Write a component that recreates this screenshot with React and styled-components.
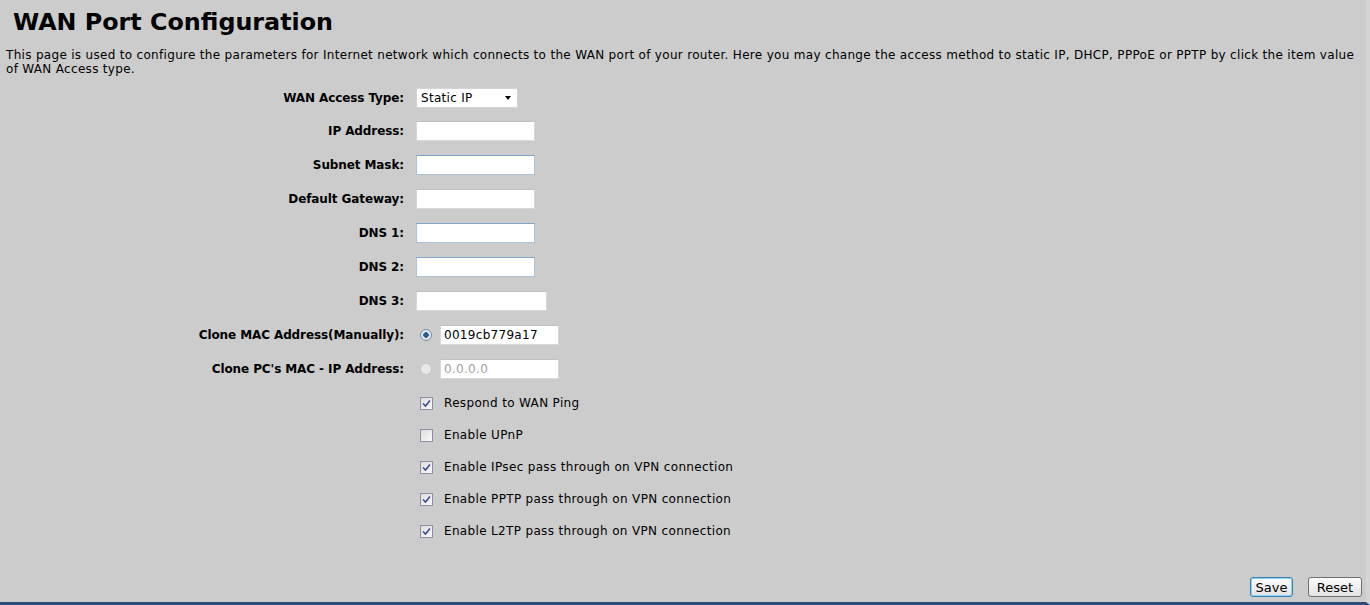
import React from 'react';
import styled, { createGlobalStyle } from 'styled-components';

const GlobalStyle = createGlobalStyle`
  html, body {
    margin: 0;
    padding: 0;
    background: #cccccc;
  }
  body {
    font-family: "DejaVu Sans", Verdana, sans-serif;
    font-size: 12px;
    color: #000;
  }
`;

const Page = styled.div`
  box-sizing: border-box;
  width: 1370px;
  height: 605px;
  background: #cccccc;
  border-bottom: 3px solid #2d4a78;
  border-right: 4px solid #d4d4d4;
  display: flex;
  flex-direction: column;
  padding: 7px 0 0 6px;
  overflow: hidden;
`;

const Title = styled.h1`
  margin: 0 0 0 7px;
  font-size: 23.8px;
  font-weight: bold;
  line-height: 30px;
`;

const Intro = styled.p`
  margin: 11px 10px 0 0;
  font-size: 12px;
  line-height: 14px;
  letter-spacing: 0.31px;
`;

const Form = styled.div`
  display: grid;
  grid-template-columns: 398px auto;
  column-gap: 12px;
  margin-top: 6px;
`;

const Label = styled.div`
  box-sizing: border-box;
  height: ${(p) => p.h || 34}px;
  display: flex;
  align-items: center;
  justify-content: flex-end;
  font-weight: bold;
  font-size: 12px;
  letter-spacing: -0.1px;
`;

const Field = styled.div`
  box-sizing: border-box;
  height: ${(p) => p.h || 34}px;
  padding-top: ${(p) => p.top || 0}px;
  display: flex;
  align-items: center;
  gap: 8px;
`;

const TextBox = styled.div`
  box-sizing: border-box;
  width: ${(p) => p.w || 119}px;
  height: 20px;
  background: #fff;
  border: 1px solid ${(p) => (p.blue ? '#a9c1d9' : '#d8d8d8')};
  border-top-color: ${(p) => (p.blue ? '#7fa4c8' : '#c0c0c0')};
  padding: 0 3px;
  display: flex;
  align-items: center;
  font-size: 12px;
  letter-spacing: 0.3px;
  color: ${(p) => (p.disabled ? '#a0a0a0' : '#000')};
`;

const Select = styled.div`
  box-sizing: border-box;
  width: 102px;
  height: 20px;
  background: #fff;
  border: 1px solid #d4d4d4;
  display: flex;
  align-items: center;
  justify-content: space-between;
  padding: 0 6px 0 4px;
  font-size: 12px;
  letter-spacing: 0.3px;
`;

const Arrow = styled.span`
  width: 0;
  height: 0;
  border-left: 3.5px solid transparent;
  border-right: 3.5px solid transparent;
  border-top: 4px solid #000;
`;

const Radio = styled.span`
  box-sizing: border-box;
  width: 12px;
  height: 12px;
  margin-left: 4px;
  border-radius: 50%;
  border: 1px solid ${(p) => (p.disabled ? '#c8c8c8' : '#7a8ea8')};
  background: ${(p) => (p.disabled ? '#e8e8e8' : 'radial-gradient(circle, #2a5c8f 0 2.5px, #dfe6ee 3px)')};
`;

const Check = styled.span`
  box-sizing: border-box;
  width: 13px;
  height: 13px;
  margin-left: 4px;
  border: 1px solid #8f8f9f;
  background: linear-gradient(135deg, #dcdcdc, #fbfbfb);
  display: flex;
  align-items: center;
  justify-content: center;
`;

const CheckText = styled.span`
  margin-left: 3px;
  font-size: 12px;
  letter-spacing: 0.34px;
`;

const Footer = styled.div`
  margin-top: auto;
  display: flex;
  justify-content: flex-end;
  gap: 15px;
  padding: 0 4px 5px 0;
`;

const Button = styled.button`
  font-family: "DejaVu Sans", Verdana, sans-serif;
  font-size: 13px;
  width: ${(p) => p.w}px;
  height: 20px;
  padding: 0;
  background: linear-gradient(#fbfbfb, #e3e3e3);
  border: 1px solid ${(p) => (p.primary ? '#3c7fb1' : '#707070')};
  box-shadow: ${(p) => (p.primary ? '0 0 0 1px #8ad3f2 inset' : 'none')};
  border-radius: 3px;
  color: #000;
`;

const Tick = () => (
  <svg width="9" height="9" viewBox="0 0 9 9">
    <path d="M1 4.5 L3.5 7 L8 1.5" fill="none" stroke="#3a4a8a" strokeWidth="1.6" />
  </svg>
);

const textRows = [
  { label: 'IP Address:' },
  { label: 'Subnet Mask:', blue: true },
  { label: 'Default Gateway:' },
  { label: 'DNS 1:', blue: true },
  { label: 'DNS 2:', blue: true },
  { label: 'DNS 3:', w: 131 },
];

const checks = [
  { text: 'Respond to WAN Ping', on: true },
  { text: 'Enable UPnP', on: false },
  { text: 'Enable IPsec pass through on VPN connection', on: true },
  { text: 'Enable PPTP pass through on VPN connection', on: true },
  { text: 'Enable L2TP pass through on VPN connection', on: true },
];

export default function App() {
  return (
    <>
      <GlobalStyle />
      <Page>
        <Title>WAN Port Configuration</Title>
        <Intro>
          This page is used to configure the parameters for Internet network which connects to the WAN port of your router. Here you may change the access method to static IP, DHCP, PPPoE or PPTP by click the item value of WAN Access type.
        </Intro>
        <Form>
          <Label h={32}>WAN Access Type:</Label>
          <Field h={32}>
            <Select>
              Static IP <Arrow />
            </Select>
          </Field>
          {textRows.map((r) => (
            <React.Fragment key={r.label}>
              <Label>{r.label}</Label>
              <Field>
                <TextBox w={r.w} blue={r.blue} />
              </Field>
            </React.Fragment>
          ))}
          <Label>Clone MAC Address(Manually):</Label>
          <Field>
            <Radio />
            <TextBox>0019cb779a17</TextBox>
          </Field>
          <Label>Clone PC's MAC - IP Address:</Label>
          <Field>
            <Radio disabled />
            <TextBox disabled>0.0.0.0</TextBox>
          </Field>
          {checks.map((c, i) => (
            <React.Fragment key={c.text}>
              <Label h={i === 0 ? 33 : 32} />
              <Field h={i === 0 ? 33 : 32} top={i === 0 ? 1 : 0}>
                <Check>{c.on && <Tick />}</Check>
                <CheckText>{c.text}</CheckText>
              </Field>
            </React.Fragment>
          ))}
        </Form>
        <Footer>
          <Button primary w={43}>Save</Button>
          <Button w={54}>Reset</Button>
        </Footer>
      </Page>
    </>
  );
}
